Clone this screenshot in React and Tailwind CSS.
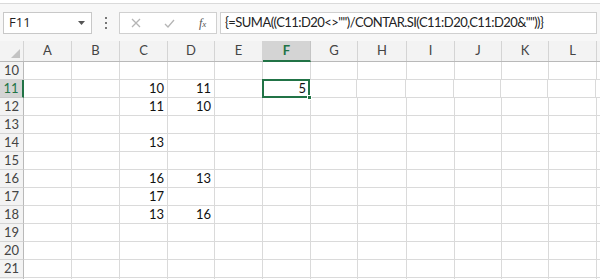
import React from 'react';

const cols = [
  ['A', 48], ['B', 48], ['C', 48], ['D', 47], ['E', 48], ['F', 48],
  ['G', 47], ['H', 49], ['I', 48], ['J', 47], ['K', 47], ['L', 48], ['M', 30],
];

const data = {
  11: { C: 10, D: 11, F: 5 },
  12: { C: 11, D: 10 },
  14: { C: 13 },
  16: { C: 16, D: 13 },
  17: { C: 17 },
  18: { C: 13, D: 16 },
};

const rows = [10, 11, 12, 13, 14, 15, 16, 17, 18, 19, 20, 21, 22];

const FormulaBar = () => (
  <div className="h-[38px] bg-[#f7f7f7]">
    <div className="mt-[3px] border-t border-[#dadada] h-[35px] flex items-start pt-[8px] pl-[3px]">
      <div className="w-[89px] shrink-0 h-[22px] border border-[#c8c8c8] bg-white flex items-center justify-between pl-[5px] pr-[6px]">
        <span className="text-[13px] text-[#222] font-['Open_Sans',sans-serif]">F11</span>
        <svg width="7" height="4" viewBox="0 0 7 4"><path d="M0 0h7L3.5 4z" fill="#555" /></svg>
      </div>
      <div className="w-[27px] shrink-0 h-[22px] flex flex-col items-center justify-center gap-[3px]">
        <span className="w-[2px] h-[2px] bg-[#777]" />
        <span className="w-[2px] h-[2px] bg-[#777]" />
        <span className="w-[2px] h-[2px] bg-[#777]" />
      </div>
      <div className="w-[98px] shrink-0 h-[22px] border border-[#d0d0d0] bg-white flex items-center">
        <svg className="ml-[11px]" width="10" height="10" viewBox="0 0 10 10">
          <path d="M1 1l8 8M9 1l-8 8" stroke="#b5b5b5" strokeWidth="1.3" />
        </svg>
        <svg className="ml-[23px]" width="11" height="9" viewBox="0 0 11 9">
          <path d="M1 5l3 3 6-7" stroke="#b5b5b5" strokeWidth="1.3" fill="none" />
        </svg>
        <span className="ml-[24px] text-[12px] italic text-[#555] font-['Liberation_Serif',serif] leading-none">
          f<span className="text-[9px]">x</span>
        </span>
      </div>
      <div className="ml-[3px] w-[377px] shrink-0 h-[22px] border border-[#d0d0d0] bg-white flex items-center pl-[4px]">
        <span className="text-[13px] tracking-[-0.55px] text-[#222] font-['Lato',sans-serif] whitespace-nowrap">
          {'{=SUMA((C11:D20<>"")/CONTAR.SI(C11:D20,C11:D20&""))}'}
        </span>
      </div>
    </div>
  </div>
);

const HeaderRow = () => (
  <div className="flex h-[21px] bg-[#f3f3f3] border-b border-[#b9b9b9]">
    <div className="w-[24px] shrink-0 relative border-r border-[#d4d4d4]">
      <svg className="absolute right-[3px] bottom-[3px]" width="9" height="9" viewBox="0 0 9 9">
        <path d="M9 0v9H0z" fill="#c3c3c3" />
      </svg>
    </div>
    {cols.map(([c, w]) => (
      <div
        key={c}
        style={{ width: w }}
        className={
          c === 'F'
            ? 'shrink-0 flex items-center justify-center bg-[#d4d4d4] border-r border-[#c4c4c4] border-b-2 border-b-[#217346] -mb-[1px] text-[13px] font-bold text-[#217346]'
            : 'shrink-0 flex items-center justify-center border-r border-[#d4d4d4] text-[13px] text-[#444]'
        }
      >
        {c === 'M' ? null : c}
      </div>
    ))}
  </div>
);

export default function App() {
  return (
    <div className="w-[600px] h-[279px] overflow-hidden bg-white font-['Lato',sans-serif]">
      <FormulaBar />
      <HeaderRow />
      {rows.map((r) => (
        <div key={r} className="flex h-[18px]">
          <div
            className={
              r === 11
                ? 'w-[24px] shrink-0 flex items-center justify-center bg-[#d4d4d4] border-b border-[#c9c9c9] border-r-2 border-r-[#217346] text-[13px] text-[#217346]'
                : 'w-[24px] shrink-0 flex items-center justify-center bg-[#f3f3f3] border-b border-[#d4d4d4] border-r border-r-[#b9b9b9] text-[13px] text-[#444]'
            }
          >
            {r < 22 ? r : null}
          </div>
          {cols.map(([c, w]) => {
            const v = data[r] && data[r][c];
            const sel = r === 11 && c === 'F';
            return (
              <div
                key={c}
                style={{ width: w }}
                className={
                  sel
                    ? 'shrink-0 relative flex items-center justify-end pr-[2px] border-2 border-[#217346] -ml-[1px] -mt-[1px] h-[19px] text-[13px] text-[#111]'
                    : 'shrink-0 flex items-center justify-end pr-[3px] border-r border-b border-[#dadada] text-[13px] text-[#111]'
                }
              >
                {v}
                {sel && (
                  <span className="absolute -right-[4px] -bottom-[4px] w-[5px] h-[5px] bg-[#217346] border border-white" />
                )}
              </div>
            );
          })}
        </div>
      ))}
    </div>
  );
}
